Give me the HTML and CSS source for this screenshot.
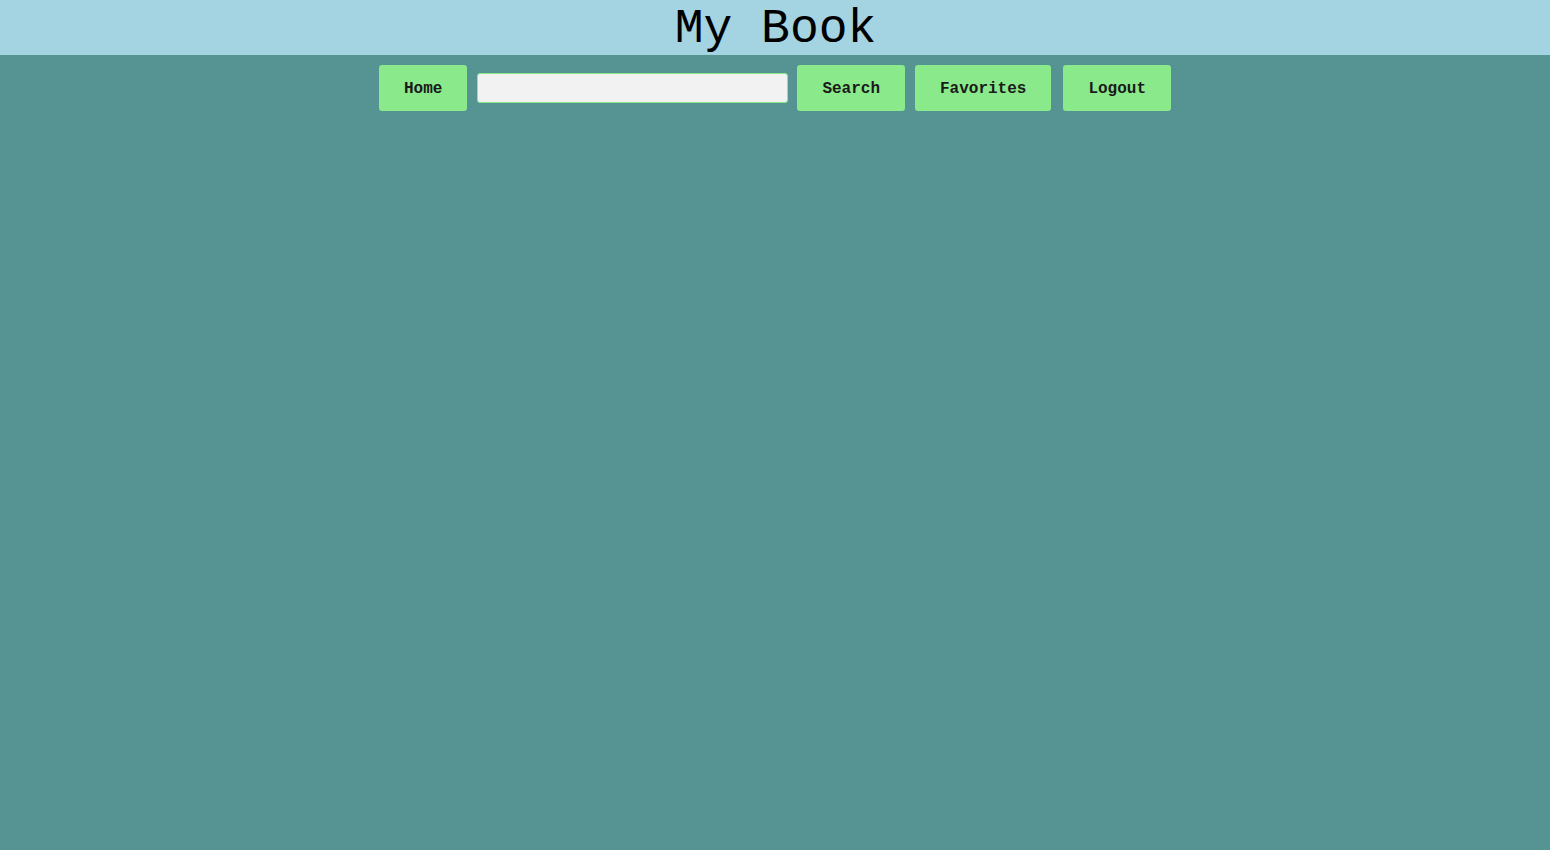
FILE: index.html
```html
<!DOCTYPE html>
<html>
<head>
<meta charset="utf-8">
<title>My Book</title>
<link rel="stylesheet" href="styles.css">
</head>
<body>
<header class="header">
  <h1 class="title">My Book</h1>
</header>
<nav class="nav">
  <button class="btn">Home</button>
  <input class="search-input" type="text">
  <button class="btn btn-search">Search</button>
  <button class="btn">Favorites</button>
  <button class="btn btn-logout">Logout</button>
</nav>
</body>
</html>
```

FILE: styles.css
```css
html, body {
  margin: 0;
  padding: 0;
  height: 100%;
}
body {
  background: #569494;
  font-family: "Liberation Mono", "Courier New", monospace;
  color: #000;
}
.header {
  background: #a4d3e1;
  height: 55px;
  display: flex;
  justify-content: center;
  align-items: flex-start;
}
.title {
  margin: 0;
  padding-top: 3px;
  font-family: "Liberation Mono", "Courier New", monospace;
  font-weight: normal;
  font-size: 48px;
  line-height: 52px;
  padding-left: 1px;
}
.nav {
  display: flex;
  justify-content: center;
  align-items: center;
  padding-top: 10px;
  gap: 10px;
}
.btn {
  background: #8ae98a;
  border: none;
  border-radius: 3px;
  font-family: "Liberation Mono", "Courier New", monospace;
  font-weight: bold;
  font-size: 16px;
  line-height: 18px;
  padding: 15px 25px 13px;
  height: 46px;
  color: #1a1a1a;
}
.search-input {
  width: 311px;
  height: 30px;
  box-sizing: border-box;
  background: #f2f2f2;
  border: 1px solid #8ae98a;
  border-radius: 3px;
  margin-right: -1px;
}
.btn-logout {
  margin-left: 2px;
}
```
